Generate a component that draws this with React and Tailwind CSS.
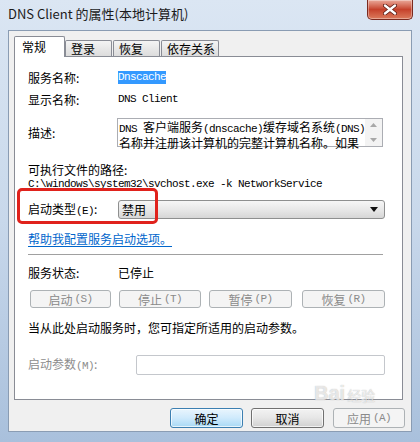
import React from "react";

const mono = "font-['Liberation_Mono','Noto_Sans_CJK_SC',monospace] text-[11px] tracking-[-0.6px]";

const M = ({ children, className = "" }) => (
  <span className={`${mono} ${className}`}>{children}</span>
);

const CloseButton = () => (
  <div className="mr-[7px] w-[46px] h-[20px] rounded-b-[5px] border border-t-0 border-[#7a2a1f] bg-gradient-to-b from-[#e9a899] via-[#c5412b] to-[#db7a5c] flex items-center justify-center shadow-[inset_0_0_0_1px_rgba(255,255,255,0.35)]">
    <svg width="14" height="11" viewBox="0 0 14 11">
      <path d="M2 1.5 L12 9.5 M12 1.5 L2 9.5" stroke="#5a1a12" strokeWidth="4" strokeLinecap="round" />
      <path d="M2 1.5 L12 9.5 M12 1.5 L2 9.5" stroke="#ffffff" strokeWidth="2.4" strokeLinecap="round" />
    </svg>
  </div>
);

const DisabledButton = ({ label, hot, className = "" }) => (
  <div
    className={`h-[18px] rounded-[3px] border border-[#adb2b5] bg-[#f4f4f4] flex items-center justify-center text-[12px] leading-[13px] text-[#8a8a8a] ${className}`}
  >
    {label}
    <M className="ml-[2px]">({hot})</M>
  </div>
);

const Tab = ({ children, active, className = "" }) =>
  active ? (
    <div className={`relative z-10 -mb-px h-[21px] bg-white border border-b-0 border-[#898c95] rounded-t-[2px] pl-[7px] pt-[2px] text-[12px] leading-[16px] text-black ${className}`}>
      {children}
    </div>
  ) : (
    <div className={`h-[16px] border border-b-0 border-[#898c95] rounded-t-[2px] bg-gradient-to-b from-[#f4f4f4] to-[#dcdcdc] pl-[5px] pt-[1px] text-[12px] leading-[14px] text-black ${className}`}>
      {children}
    </div>
  );

export default function App() {
  return (
    <div className="w-[420px] h-[442px] overflow-hidden relative font-['Noto_Sans_CJK_SC',sans-serif] bg-gradient-to-b from-[#dbe6f3] via-[#c8d8eb] to-[#a9c0dc] flex flex-col">
      {/* title bar */}
      <div className="h-[30px] flex items-start justify-between shrink-0">
        <div className="pl-[8px] pt-[5px] text-[13px] leading-[18px] text-[#1b1b1b]">
          DNS Client 的属性(本地计算机)
        </div>
        <CloseButton />
      </div>

      {/* dialog body */}
      <div className="mx-[8px] h-[402px] bg-[#f0f0f0] border border-[#8a9cb3] flex flex-col relative">
        {/* tabs */}
        <div className="flex items-end h-[20px] mt-[5px] pl-[5px]">
          <Tab active className="w-[51px]">常规</Tab>
          <Tab className="w-[47px]">登录</Tab>
          <Tab className="w-[47px] ml-[1px]">恢复</Tab>
          <Tab className="w-[58px] ml-[1px]">依存关系</Tab>
        </div>

        {/* tab page */}
        <div className="relative ml-[5px] w-[389px] h-[344px] bg-white border border-[#898c95] pl-[13px] text-[12px] leading-[13px] text-black">
          <div className="flex items-center h-[13px] mt-[14px]">
            <div className="w-[90px]">服务名称:</div>
            <M className="bg-[#3399ff] text-white h-[13px] leading-[13px] px-0">Dnscache</M>
          </div>

          <div className="flex items-center h-[13px] mt-[9px]">
            <div className="w-[90px]">显示名称:</div>
            <M>DNS Client</M>
          </div>

          <div className="flex items-center h-[29px] mt-[12px]">
            <div className="w-[89px]">描述:</div>
            <div className="w-[266px] h-[29px] border border-[#abadb3] flex">
              <div className="flex-1 pl-[1px] pt-px text-[12px] leading-[13px] whitespace-nowrap">
                <div>
                  <M>DNS </M>客户端服务<M>(dnscache)</M>缓存域名系统<M>(DNS)</M>
                </div>
                <div>名称并注册该计算机的完整计算机名称。如果</div>
              </div>
              <div className="w-[17px] bg-[#f3f3f3] flex flex-col items-center justify-between py-[4px]">
                <svg width="7" height="4" viewBox="0 0 7 4">
                  <path d="M0 4 L3.5 0 L7 4 Z" fill="#a8a8a8" />
                </svg>
                <svg width="7" height="4" viewBox="0 0 7 4">
                  <path d="M0 0 L3.5 4 L7 0 Z" fill="#a8a8a8" />
                </svg>
              </div>
            </div>
          </div>

          <div className="h-[14px] mt-[15px] flex items-center">可执行文件的路径:</div>
          <div className="h-[12px] mt-[2px] flex items-center">
            <M>{"C:\\windows\\system32\\svchost.exe -k NetworkService"}</M>
          </div>

          <div className="flex items-center h-[19px] mt-[10px]">
            <div className="w-[90px]">
              启动类型<M>(E)</M>:
            </div>
            <div className="w-[267px] h-[19px] rounded-[3px] border border-[#8e8f8f] bg-gradient-to-b from-[#f6f6f6] via-[#e8e8e8] to-[#d6d6d6] flex items-center justify-between pl-[3px] pr-[6px]">
              <span>禁用</span>
              <svg width="8" height="5" viewBox="0 0 8 5">
                <path d="M0 0 L8 0 L4 5 Z" fill="#111" />
              </svg>
            </div>
          </div>

          <div className="h-[12px] mt-[13px] flex items-center">
            <span className="text-[#0066cc] underline underline-offset-2">帮助我配置服务启动选项。</span>
          </div>

          <div className="w-[355px] h-px bg-[#a0a0a0] mt-[10px]" />

          <div className="flex items-center h-[13px] mt-[11px]">
            <div className="w-[90px]">服务状态:</div>
            <div>已停止</div>
          </div>

          <div className="flex items-center mt-[11px] pl-[2px]">
            <DisabledButton label="启动" hot="S" className="w-[81px]" />
            <DisabledButton label="停止" hot="T" className="w-[82px] ml-[8px]" />
            <DisabledButton label="暂停" hot="P" className="w-[83px] ml-[8px]" />
            <DisabledButton label="恢复" hot="R" className="w-[83px] ml-[10px]" />
          </div>

          <div className="h-[13px] mt-[13px] flex items-center">当从此处启动服务时，您可指定所适用的启动参数。</div>

          <div className="flex items-center h-[20px] mt-[21px]">
            <div className="w-[108px] text-[#8d8d8d]">
              启动参数<M>(M)</M>:
            </div>
            <div className="w-[249px] h-[20px] rounded-[2px] border border-[#c4c7cc] bg-white" />
          </div>

          {/* red annotation */}
          <div className="absolute left-[2px] top-[131px] w-[141px] h-[36px] rounded-[5px] border-[3px] border-[#e0221c]" />
        </div>

        {/* bottom buttons */}
        <div className="flex justify-end items-center mt-[8px] pr-[6px] text-[12px] leading-[13px]">
          <div className="w-[73px] h-[20px] rounded-[3px] border border-[#3c7fb1] bg-gradient-to-b from-[#e9f5fd] via-[#cfeafc] to-[#a7d9f5] shadow-[inset_0_0_0_1px_rgba(255,255,255,0.7)] flex items-center justify-center text-black">
            确定
          </div>
          <div className="w-[73px] h-[20px] ml-[8px] rounded-[3px] border border-[#707070] bg-gradient-to-b from-[#f3f3f3] via-[#e6e6e6] to-[#d0d0d0] shadow-[inset_0_0_0_1px_rgba(255,255,255,0.7)] flex items-center justify-center text-black">
            取消
          </div>
          <div className="w-[72px] h-[20px] ml-[9px] rounded-[3px] border border-[#adb2b5] bg-[#f4f4f4] flex items-center justify-center text-[#8a8a8a]">
            应用<M className="ml-[2px]">(A)</M>
          </div>
        </div>

        {/* watermark */}
        <div className="absolute left-[305px] top-[352px] flex items-end gap-[2px] text-white/70 pointer-events-none [text-shadow:0_0_1px_rgba(120,120,120,0.6)]">
          <span className="font-['Liberation_Sans',sans-serif] font-bold text-[20px] leading-[20px]">Bai</span>
          <span className="text-[14px] leading-[16px]">经验</span>
        </div>
      </div>
    </div>
  );
}
